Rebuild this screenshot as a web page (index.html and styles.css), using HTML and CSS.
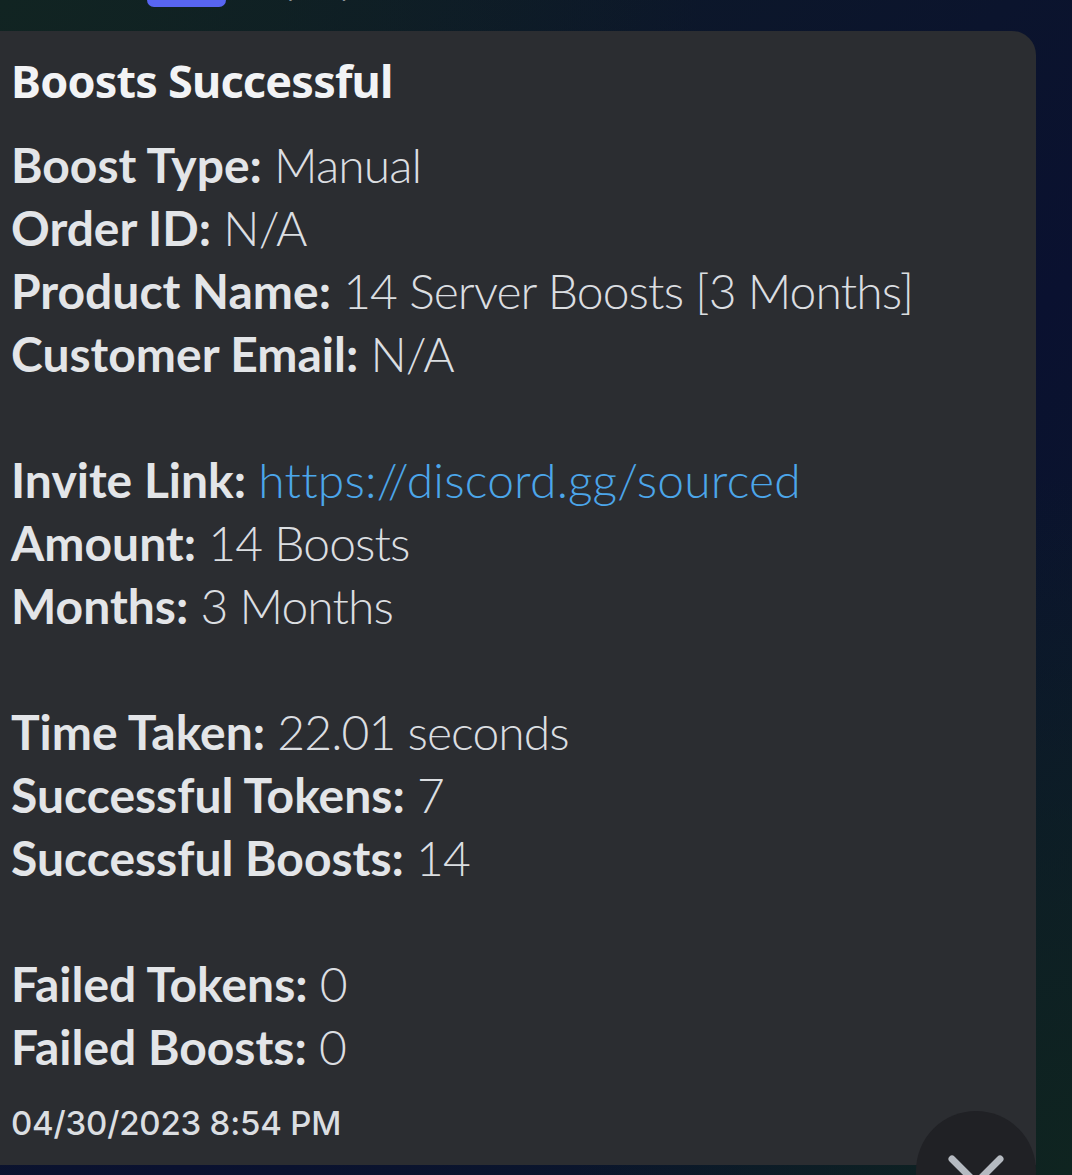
FILE: index.html
```html
<!DOCTYPE html>
<html>
<head>
<meta charset="utf-8">
<link rel="stylesheet" href="styles.css">
</head>
<body>
<div class="page">
  <div class="header">
    <span class="badge"></span>
    <span class="stamp">04/30/2023 8:54 PM</span>
  </div>
  <div class="card">
    <div class="title">Boosts Successful</div>
    <div class="desc">
      <div class="line"><b>Boost Type:</b> Manual</div>
      <div class="line"><b>Order ID:</b> N/A</div>
      <div class="line"><b>Product Name:</b> 14 Server Boosts [3 Months]</div>
      <div class="line"><b>Customer Email:</b> N/A</div>
      <div class="line blank"></div>
      <div class="line"><b>Invite Link:</b> <a class="link" href="#">https://discord.gg/sourced</a></div>
      <div class="line"><b>Amount:</b> 14 Boosts</div>
      <div class="line"><b>Months:</b> 3 Months</div>
      <div class="line blank"></div>
      <div class="line"><b>Time Taken:</b> 22.01 seconds</div>
      <div class="line"><b>Successful Tokens:</b> 7</div>
      <div class="line"><b>Successful Boosts:</b> 14</div>
      <div class="line blank"></div>
      <div class="line"><b>Failed Tokens:</b> 0</div>
      <div class="line"><b>Failed Boosts:</b> 0</div>
    </div>
    <div class="footer">04/30/2023 8:54 PM</div>
  </div>
  <button class="fab" aria-label="Scroll down">
    <svg width="60" height="40" viewBox="0 0 60 40"><path d="M6 6 L30 30 L54 6" fill="none" stroke="#b5bac1" stroke-width="7" stroke-linecap="round" stroke-linejoin="round"/></svg>
  </button>
</div>
</body>
</html>
```
FILE: styles.css
```css
html, body {
  margin: 0;
  padding: 0;
}
body {
  width: 1072px;
  height: 1175px;
  overflow: hidden;
  background:
    radial-gradient(ellipse 700px 600px at 0% 0%, #112422 0%, rgba(17,36,34,0) 100%),
    radial-gradient(ellipse 500px 700px at 100% 100%, #0f2420 0%, rgba(15,36,32,0) 100%),
    linear-gradient(135deg, #0e1d24 0%, #0a1130 60%, #0b1a28 100%);
  font-family: "Lato", "Noto Sans", sans-serif;
}
.page {
  position: relative;
  width: 1072px;
  height: 1175px;
}
.header {
  height: 31px;
  display: flex;
  align-items: flex-start;
  overflow: hidden;
}
.badge {
  display: block;
  width: 79px;
  height: 30px;
  margin-top: -23px;
  margin-left: 147px;
  background: #5865f2;
  border-radius: 7px;
}
.stamp {
  margin-left: 24px;
  margin-top: -34px;
  font-size: 34px;
  line-height: 40px;
  color: #8e949c;
  font-style: italic;
}
.card {
  margin-left: -24px;
  width: 1060px;
  height: 1134px;
  box-sizing: border-box;
  padding: 22px 0 0 35px;
  background: #2b2d31;
  border-radius: 0 24px 0 0;
  color: #dbdee1;
}
.title {
  font-family: "Noto Sans", sans-serif;
  font-size: 45px;
  line-height: 56px;
  font-weight: 700;
  color: #f2f3f5;
  letter-spacing: -0.8px;
  height: 56px;
}
.desc {
  margin-top: 24px;
  font-size: 48px;
  line-height: 63px;
  font-weight: 300;
  color: #dbdee1;
  letter-spacing: -0.9px;
}
.line {
  height: 63px;
  white-space: nowrap;
}
.line b {
  font-weight: 700;
  color: #e3e5e8;
  letter-spacing: 0;
}
.link {
  color: #4ca6ea;
  text-decoration: none;
  letter-spacing: 0.2px;
}
.footer {
  margin-top: 23px;
  font-family: "Inter", sans-serif;
  font-size: 33px;
  line-height: 44px;
  font-weight: 500;
  color: #dbdee1;
  letter-spacing: -0.2px;
}
.fab {
  position: absolute;
  left: 916px;
  top: 1111px;
  width: 120px;
  height: 120px;
  border-radius: 50%;
  border: none;
  padding: 0;
  background: #202125;
  display: flex;
  justify-content: center;
  align-items: flex-start;
}
.fab svg {
  margin-top: 42px;
}
```
